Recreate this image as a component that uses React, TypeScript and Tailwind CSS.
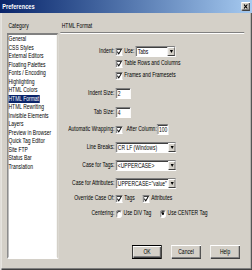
import React from "react";

const Check = ({ checked = true }: { checked?: boolean }) => (
  <span className="inline-flex w-[10px] h-[8px] shrink-0 items-center justify-center bg-white border border-t-[#808080] border-l-[#808080] border-b-white border-r-[#d4d0c8] shadow-[inset_1px_1px_#404040]">
    {checked && (
      <svg viewBox="0 0 8 7" className="w-[8px] h-[6px]">
        <path d="M1 3.2 L3.2 5.6 L7 1" stroke="#000" strokeWidth="1.4" fill="none" />
      </svg>
    )}
  </span>
);

const Radio = ({ checked = false }: { checked?: boolean }) => (
  <span className="inline-flex w-[9px] h-[8px] shrink-0 items-center justify-center rounded-full bg-white border border-t-[#808080] border-l-[#808080] border-b-white border-r-white shadow-[inset_1px_1px_#404040]">
    {checked && <span className="w-[3px] h-[3px] rounded-full bg-black" />}
  </span>
);

const Arrow = () => (
  <span className="flex w-[10px] h-full shrink-0 items-center justify-center bg-[#d4d0c8] border border-t-white border-l-white border-b-[#404040] border-r-[#404040]">
    <svg viewBox="0 0 6 4" className="w-[5px] h-[3px]">
      <path d="M0 0 H6 L3 4 Z" fill="#000" />
    </svg>
  </span>
);

const Select = ({ value, className }: { value: string; className: string }) => (
  <div className={`flex h-[11px] bg-white border border-t-[#808080] border-l-[#808080] border-b-white border-r-white shadow-[inset_1px_1px_#404040] ${className}`}>
    <span className="flex-1 pl-[2px] leading-[9px] whitespace-nowrap overflow-hidden">{value}</span>
    <Arrow />
  </div>
);

const Input = ({ value, className }: { value: string; className: string }) => (
  <div className={`h-[11px] bg-white border border-t-[#808080] border-l-[#808080] border-b-white border-r-white shadow-[inset_1px_1px_#404040] pl-[2px] leading-[9px] ${className}`}>
    {value}
  </div>
);

const Row = ({ label, className, children }: { label: string; className: string; children?: React.ReactNode }) => (
  <div className={`flex items-center h-[11px] gap-[2px] ${className}`}>
    <span className="w-[76px] text-right whitespace-nowrap">{label}</span>
    <div className="flex items-center">{children}</div>
  </div>
);

const Btn = ({ label, isDefault = false }: { label: string; isDefault?: boolean }) => (
  <div className={`w-[42px] h-[14px] flex items-center justify-center bg-[#d4d0c8] ${isDefault ? "border border-black shadow-[inset_1px_1px_#fff,inset_-1px_-1px_#404040,inset_-2px_-2px_#808080]" : "shadow-[inset_1px_1px_#fff,inset_-1px_-1px_#404040,inset_-2px_-2px_#808080]"}`}>
    {label}
  </div>
);

const items = [
  "General",
  "CSS Styles",
  "External Editors",
  "Floating Palettes",
  "Fonts / Encoding",
  "Highlighting",
  "HTML Colors",
  "HTML Format",
  "HTML Rewriting",
  "Invisible Elements",
  "Layers",
  "Preview in Browser",
  "Quick Tag Editor",
  "Site FTP",
  "Status Bar",
  "Translation",
];

export default function App() {
  return (
    <div className="w-[252px] h-[270px] overflow-hidden bg-[#d4d0c8]">
      <div className="w-[355px] h-[270px] origin-top-left scale-x-[0.71] flex flex-col bg-[#d4d0c8] text-black text-[7px] font-['Liberation_Sans',Arial,sans-serif] shadow-[inset_1px_1px_#d4d0c8,inset_2px_2px_#fff,inset_-1px_-1px_#404040,inset_-2px_-2px_#808080]">
        {/* title bar */}
        <div className="h-[13px] shrink-0 flex items-center justify-between pl-[3px] pr-[3px] bg-linear-to-r from-[#0a246a] to-[#a6caf0]">
          <span className="text-white font-bold text-[8px] leading-[10px]">Preferences</span>
          <span className="flex w-[12px] h-[9px] items-center justify-center bg-[#d4d0c8] shadow-[inset_1px_1px_#fff,inset_-1px_-1px_#404040,inset_-2px_-2px_#808080]">
            <svg viewBox="0 0 6 5" className="w-[6px] h-[5px]">
              <path d="M0.5 0.5 L5.5 4.5 M5.5 0.5 L0.5 4.5" stroke="#000" strokeWidth="1.2" />
            </svg>
          </span>
        </div>
        {/* body */}
        <div className="flex flex-1">
          {/* left column */}
          <div className="ml-[10px] w-[72px] flex flex-col">
            <div className="mt-[9px] h-[8px] leading-[8px] pl-[2px]">Category</div>
            <div className="mt-[3px] h-[226px] bg-white border-2 border-t-[#808080] border-l-[#808080] border-b-white border-r-[#d4d0c8] flex flex-col">
              {items.map((it) => (
                <div key={it} className="h-[8.5px] leading-[8.5px] whitespace-nowrap">
                  {it === "HTML Format" ? (
                    <span className="inline-block bg-[#0a246a] text-white pr-[1px]">{it}</span>
                  ) : (
                    it
                  )}
                </div>
              ))}
            </div>
          </div>
          {/* right column */}
          <div className="ml-[3px] w-[259px] flex flex-col">
            <div className="mt-[9px] h-[8px] leading-[8px] pl-[2px]">HTML Format</div>
            <div className="mt-[2px] h-[2px] border-t border-t-[#808080] border-b border-b-white" />
            <Row label="Indent:" className="mt-[12px]">
              <Check />
              <span className="ml-[2px] w-[16px]">Use:</span>
              <Select value="Tabs" className="w-[56px]" />
            </Row>
            <Row label="" className="mt-[1px]">
              <Check />
              <span className="ml-[2px] whitespace-nowrap">Table Rows and Columns</span>
            </Row>
            <Row label="" className="mt-[1px]">
              <Check />
              <span className="ml-[2px] whitespace-nowrap">Frames and Framesets</span>
            </Row>
            <Row label="Indent Size:" className="mt-[7px]">
              <Input value="2" className="w-[21px]" />
            </Row>
            <Row label="Tab Size:" className="mt-[8px]">
              <Input value="4" className="w-[21px]" />
            </Row>
            <Row label="Automatic Wrapping:" className="mt-[6px]">
              <Check />
              <span className="ml-[5px] w-[43px] whitespace-nowrap">After Column:</span>
              <Input value="100" className="w-[16px]" />
            </Row>
            <Row label="Line Breaks:" className="mt-[7px]">
              <Select value="CR LF (Windows)" className="w-[85px]" />
            </Row>
            <Row label="Case for Tags:" className="mt-[7px]">
              <Select value="<UPPERCASE>" className="w-[85px]" />
            </Row>
            <Row label="Case for Attributes:" className="mt-[7px]">
              <Select value={'UPPERCASE="value"'} className="w-[85px]" />
            </Row>
            <Row label="Override Case Of:" className="mt-[4px]">
              <Check />
              <span className="ml-[2px] w-[26px]">Tags</span>
              <Check />
              <span className="ml-[2px]">Attributes</span>
            </Row>
            <Row label="Centering:" className="mt-[4px]">
              <Radio />
              <span className="ml-[2px] w-[51px] whitespace-nowrap">Use DIV Tag</span>
              <Radio checked />
              <span className="ml-[2px] whitespace-nowrap">Use CENTER Tag</span>
            </Row>
            <div className="mt-[26px] flex justify-end gap-[13px] pr-[6px]">
              <Btn label="OK" isDefault />
              <Btn label="Cancel" />
              <Btn label="Help" />
            </div>
          </div>
        </div>
      </div>
    </div>
  );
}
